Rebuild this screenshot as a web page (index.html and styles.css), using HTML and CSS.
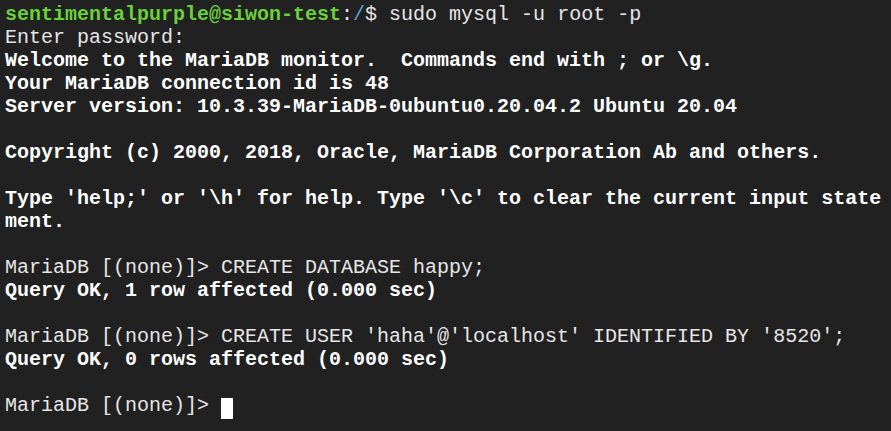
FILE: index.html
```html
<!DOCTYPE html>
<html>
<head>
<meta charset="utf-8">
<link rel="stylesheet" href="styles.css">
</head>
<body>
<pre class="term"><span class="b g">sentimentalpurple@siwon-test</span>:<span class="bl">/</span>$ sudo mysql -u root -p
Enter password:
<span class="b">Welcome to the MariaDB monitor.  Commands end with ; or \g.</span>
<span class="b">Your MariaDB connection id is 48</span>
<span class="b">Server version: 10.3.39-MariaDB-0ubuntu0.20.04.2 Ubuntu 20.04</span>

<span class="b">Copyright (c) 2000, 2018, Oracle, MariaDB Corporation Ab and others.</span>

<span class="b">Type 'help;' or '\h' for help. Type '\c' to clear the current input state</span>
<span class="b">ment.</span>

MariaDB [(none)]&gt; CREATE DATABASE happy;
<span class="b">Query OK, 1 row affected (0.000 sec)</span>

MariaDB [(none)]&gt; CREATE USER 'haha'@'localhost' IDENTIFIED BY '8520';
<span class="b">Query OK, 0 rows affected (0.000 sec)</span>

MariaDB [(none)]&gt; <span class="cursor"> </span></pre>
</body>
</html>
```
FILE: styles.css
```css
html, body {
  margin: 0;
  padding: 0;
  background: #212121;
  height: 100%;
  overflow: hidden;
}
.term {
  margin: 0;
  padding: 3px 5px;
  font-family: "Liberation Mono", "Courier New", monospace;
  font-size: 20px;
  line-height: 23px;
  color: #e6e6e6;
  white-space: pre;
}
.b { font-weight: bold; color: #ffffff; }
.g { color: #6ad03a; }
.bl { color: #5f9fd8; }
.cursor {
  display: inline-block;
  width: 12px;
  height: 21px;
  background: #ffffff;
  vertical-align: -4px;
}
```
